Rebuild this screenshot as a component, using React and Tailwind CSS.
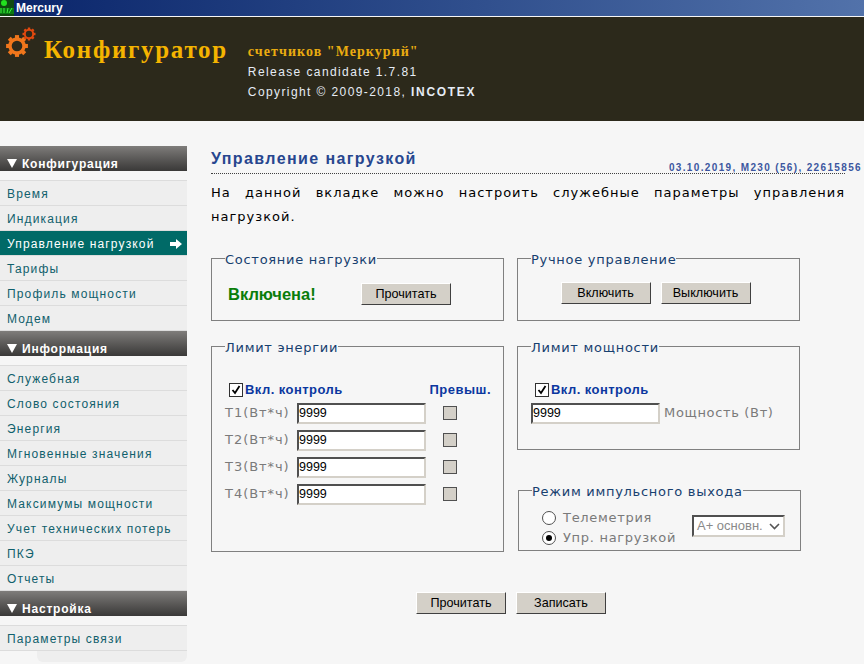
const sans = "font-['Liberation_Sans',Arial,sans-serif]";
const dejavu = "font-['DejaVu_Sans',Verdana,sans-serif]";

const menu = [
  {
    title: 'Конфигурация',
    items: ['Время', 'Индикация', 'Управление нагрузкой', 'Тарифы', 'Профиль мощности', 'Модем'],
  },
  {
    title: 'Информация',
    items: [
      'Служебная',
      'Слово состояния',
      'Энергия',
      'Мгновенные значения',
      'Журналы',
      'Максимумы мощности',
      'Учет технических потерь',
      'ПКЭ',
      'Отчеты',
    ],
  },
  { title: 'Настройка', items: ['Параметры связи'] },
];

const Gear = ({ cx, cy, r, teeth, width, color }) => (
  <g>
    <circle cx={cx} cy={cy} r={r} fill="none" stroke={color} strokeWidth={width} />
    {Array.from({ length: teeth }).map((_, i) => (
      <rect
        key={i}
        x={cx - width * 0.6}
        y={cy - r - width * 1.15}
        width={width * 1.2}
        height={width}
        fill={color}
        transform={`rotate(${(i * 360) / teeth} ${cx} ${cy})`}
      />
    ))}
  </g>
);

const Logo = () => (
  <svg width="32" height="32" viewBox="0 0 32 32" className="shrink-0">
    <Gear cx={12} cy={19} r={7} teeth={8} width={3.4} color="#f0761c" />
    <Gear cx={24} cy={7} r={4.2} teeth={8} width={2} color="#e2490f" />
  </svg>
);

const AppIcon = () => (
  <svg width="14" height="16" viewBox="0 0 14 16" className="shrink-0">
    <rect width="14" height="16" fill="#0f4a10" />
    <rect x="0" y="8" width="14" height="6" fill="#0b7a12" />
    <circle cx="4" cy="3" r="3" fill="#22e01e" />
    <path d="M1 8v5M4 8v5M7 13l1-5M9 13l3-5" stroke="#3cf03a" strokeWidth="1" fill="none" />
  </svg>
);

const Button = ({ children, className = '' }) => (
  <button
    type="button"
    className={`h-[22px] w-[90px] border border-t-white border-l-white border-r-[#404040] border-b-[#404040] bg-[#d4d0c8] text-[12.6px] text-black ${sans} ${className}`}
  >
    {children}
  </button>
);

const Box = ({ title, className = '', children }) => (
  <fieldset className={`m-0 border border-[#808080] pl-[13px] pr-0 ${className}`}>
    <legend className={`ml-0 px-0 pt-[2px] text-[13px] leading-[15px] tracking-[0.72px] text-[#17406f] ${dejavu}`}>
      {title}
    </legend>
    {children}
  </fieldset>
);

const Field = ({ className = '' }) => (
  <input
    readOnly
    value="9999"
    className={`h-[21px] w-[129px] border-2 border-t-[#505050] border-l-[#505050] border-r-[#d4d0c8] border-b-[#d4d0c8] bg-white pl-0 text-[12.5px] text-black outline-none ${sans} ${className}`}
  />
);

const Check = () => (
  <div className="flex h-[14px] w-[14px] items-center justify-center border border-[#303030] bg-white">
    <svg width="10" height="10" viewBox="0 0 10 10">
      <path d="M1.5 5l2.5 3 4.5-7" fill="none" stroke="#000" strokeWidth="1.8" />
    </svg>
  </div>
);

const Control = ({ className = '' }) => (
  <div className={`flex items-center gap-[2px] ${className}`}>
    <Check />
    <span className={`text-[13px] font-bold tracking-[0.45px] text-[#0b37a0] ${sans}`}>Вкл. контроль</span>
  </div>
);

const Radio = ({ checked }) => (
  <div className="flex h-[14px] w-[14px] items-center justify-center rounded-full border border-[#505050] bg-white">
    {checked && <div className="h-[6px] w-[6px] rounded-full bg-black" />}
  </div>
);

const Sidebar = () => (
  <aside className={`w-[187px] shrink-0 pt-[25px] ${sans}`}>
    {menu.map((group) => (
      <div key={group.title}>
        <div className="flex h-[25px] items-end bg-gradient-to-b from-[#7f7d7b] to-[#3a3938] pl-[7px] text-[12px] font-bold leading-[13px] tracking-[0.8px] text-white">
          <span className="mr-[5px] mb-[3px] h-0 w-0 border-x-[5px] border-t-[9px] border-x-transparent border-t-white" />
          {group.title}
        </div>
        <div className="mt-[9px] border-b border-[#dcdcdc]">
          {group.items.map((item) => {
            const active = item === 'Управление нагрузкой';
            return (
              <div
                key={item}
                className={`flex h-[25px] items-center justify-between border-t border-[#dcdcdc] pl-[7px] pr-[5px] pt-px text-[12px] tracking-[1.15px] ${
                  active ? 'bg-[#006a67] text-white' : 'bg-[#eeeeee] text-[#10606c]'
                }`}
              >
                {item}
                {active && (
                  <svg width="12" height="10" viewBox="0 0 12 10">
                    <path d="M0 3h6V0l6 5-6 5V7H0z" fill="#fff" />
                  </svg>
                )}
              </div>
            );
          })}
        </div>
      </div>
    ))}
    <div className="ml-[37px] h-[11px] rounded-b-[6px] bg-[#eeeeee]" />
  </aside>
);

export default function App() {
  return (
    <div className="h-[664px] w-[864px] overflow-hidden bg-[#f6f6f6]">
      <div className={`flex h-[16px] items-center gap-[2px] bg-gradient-to-r from-[#0a246a] to-[#5272aa] text-[12px] font-bold text-white ${sans}`}>
        <AppIcon />
        Mercury
      </div>
      <header className="mt-px flex h-[104px] bg-[#2c291b] pl-[5px]">
        <div className="mt-[10px]">
          <Logo />
        </div>
        <div className="ml-[7px] mt-[16px] text-[25px] font-bold leading-[34px] tracking-[1.7px] text-[#f5b400] font-['Liberation_Serif',serif]">
          Конфигуратор
        </div>
        <div className={`ml-[20px] mt-[25px] text-[12px] leading-[20px] tracking-[1.4px] text-[#e6ecf5] ${sans}`}>
          <div className="text-[14px] font-bold tracking-[1.05px] text-[#eaac10] font-['Liberation_Serif',serif]">
            счетчиков "Меркурий"
          </div>
          <div>Release candidate 1.7.81</div>
          <div>
            Copyright © 2009-2018, <span className="font-semibold tracking-[1.7px]">INCOTEX</span>
          </div>
        </div>
      </header>
      <div className="flex">
        <Sidebar />
        <main className="min-w-0 flex-1 pl-[24px] pt-[28px]">
          <div className="relative mr-[19px] h-[25px] border-b border-dotted border-[#404040]">
            <h1 className={`text-[16px] font-bold leading-[19px] tracking-[1.4px] text-[#27468f] ${sans}`}>
              Управление нагрузкой
            </h1>
            <div className={`absolute right-[-17px] top-[11px] text-[10px] font-bold tracking-[1.35px] text-[#3c56a0] ${sans}`}>
              03.10.2019, M230 (56), 22615856
            </div>
          </div>
          <p className={`mr-[19px] mt-[7px] text-justify text-[13px] leading-[24px] tracking-[1px] text-black ${dejavu}`}>
            На данной вкладке можно настроить служебные параметры управления нагрузкой.
          </p>
          <div className="mt-[21px] flex gap-[13px]">
            <Box title="Состояние нагрузки" className="h-[71px] w-[293px]">
              <div className="flex items-center pt-[15px] pl-[3px]">
                <span className={`w-[133px] text-[16.5px] font-bold text-[#0a7d0a] ${sans}`}>Включена!</span>
                <Button>Прочитать</Button>
              </div>
            </Box>
            <Box title="Ручное управление" className="h-[71px] w-[283px]">
              <div className="flex justify-center gap-[10px] pt-[15px] pr-[19px]">
                <Button>Включить</Button>
                <Button>Выключить</Button>
              </div>
            </Box>
          </div>
          <div className="mt-[17px] flex gap-[13px]">
            <Box title="Лимит энергии" className="h-[214px] w-[293px]">
              <div className="flex items-center justify-between pr-[12px] pt-[25px] pl-[4px]">
                <Control />
                <span className={`text-[13px] font-bold tracking-[0.5px] text-[#0b37a0] ${sans}`}>Превыш.</span>
              </div>
              {['T1', 'T2', 'T3', 'T4'].map((t, i) => (
                <div key={t} className={`flex h-[21px] items-center ${i === 0 ? 'mt-[3px]' : 'mt-[6px]'}`}>
                  <span className={`w-[72px] text-[13px] tracking-[0.95px] text-[#7a7a7a] ${dejavu}`}>{t}(Вт*ч)</span>
                  <Field />
                  <div className="ml-[17px] h-[14px] w-[14px] border border-[#505050] bg-[#d4d0c8]" />
                </div>
              ))}
            </Box>
            <div className="flex w-[283px] flex-col">
              <Box title="Лимит мощности" className="h-[112px] w-[283px]">
                <Control className="ml-[4px] pt-[25px]" />
                <div className="mt-[3px] flex items-center">
                  <Field />
                  <span className={`ml-[4px] text-[13px] tracking-[0.66px] text-[#7a7a7a] ${dejavu}`}>Мощность (Вт)</span>
                </div>
              </Box>
              <Box title="Режим импульсного выхода" className="ml-px mt-[32px] h-[69px] w-[283px]">
                <div className="flex pl-[10px] pt-[8px]">
                  <div className="w-[150px] pt-[1px]">
                    {['Телеметрия', 'Упр. нагрузкой'].map((label, i) => (
                      <div key={label} className="flex h-[20px] items-center gap-[7px]">
                        <Radio checked={i === 1} />
                        <span className={`text-[13px] tracking-[0.7px] text-[#7a7a7a] ${dejavu}`}>{label}</span>
                      </div>
                    ))}
                  </div>
                  <div className={`mt-[8px] flex h-[22px] w-[93px] items-center justify-between border-2 border-t-[#505050] border-l-[#505050] border-r-[#d4d0c8] border-b-[#d4d0c8] bg-white pl-[3px] pr-[3px] text-[13px] text-[#8a8a8a] ${sans}`}>
                    A+ основн.
                    <svg width="11" height="7" viewBox="0 0 11 7">
                      <path d="M1 1l4.5 4.5L10 1" fill="none" stroke="#555" strokeWidth="1.6" />
                    </svg>
                  </div>
                </div>
              </Box>
            </div>
          </div>
          <div className="ml-[205px] mt-[40px] flex gap-[10px]">
            <Button>Прочитать</Button>
            <Button>Записать</Button>
          </div>
        </main>
      </div>
    </div>
  );
}
